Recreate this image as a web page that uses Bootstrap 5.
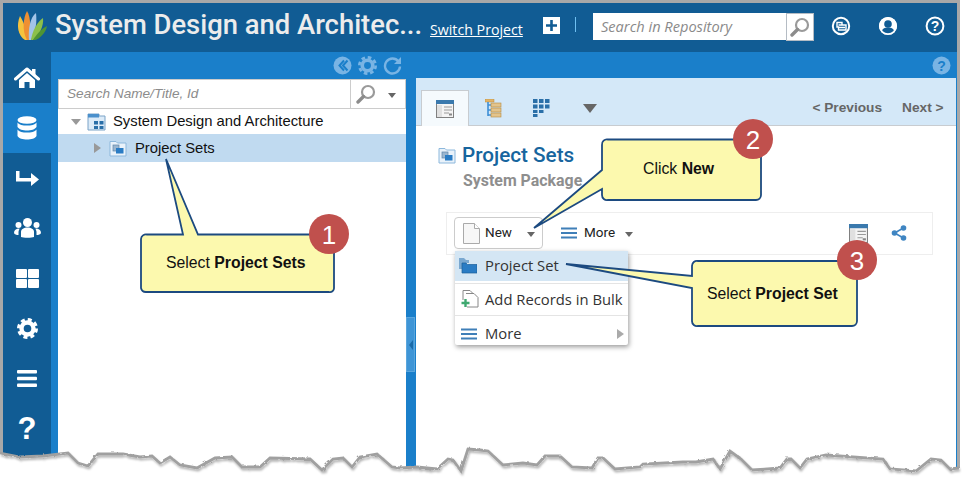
<!DOCTYPE html>
<html lang="en">
<head>
<meta charset="utf-8">
<title>Project Sets</title>
<link rel="stylesheet" href="https://cdn.jsdelivr.net/npm/bootstrap@5.3.0/dist/css/bootstrap.min.css">
<style>
html,body{margin:0;background:#fff;overflow:hidden}
body{width:966px;height:487px;position:relative;font-family:"Liberation Sans",Arial,sans-serif}
.shot-edge{width:960px;height:487px;background:#a8a8a8;padding:3px 3px 0 3px}
.app-shell{height:484px;background:#1a7fca}
.top-head{height:49px;background:#115c94;color:#fff;padding-left:13px}
.logo-mark{width:32px;height:32px;margin-right:7px;margin-top:-4px;flex:none}
.app-title{font:500 27.4px/1 Roboto,sans-serif;color:#ececec;width:375px;white-space:nowrap;margin-top:-3px;flex:none}
.switch-link{font:14.2px/1 "Open Sans",sans-serif;color:#fff;text-decoration:underline;width:113px;margin-top:5px;flex:none;white-space:nowrap}
.plus-box{width:17px;height:17px;background:#fff;margin-right:15px;margin-top:-4px;flex:none}
.head-sep{width:1px;height:15px;background:#6fc0f2;margin-right:17px;margin-top:-7px;flex:none}
.repo-search{width:221px;height:27px;margin-top:-3px;margin-right:17px;flex:none;background:#fff}
.repo-search span{flex:1;font:italic 14.6px/26px "Open Sans",sans-serif;color:#8a8a8a;padding-left:8px;white-space:nowrap}
.repo-btn{width:28px;height:28px;border:1px solid #b5bcc4;background:#fff}
.ring-icon{width:20px;height:20px;margin-right:27px;margin-top:-3px;flex:none}
.side-rail{width:48px;background:#115c94;flex:none}
.rail-item{height:50px;color:#fff}
.rail-item.first-item{height:51px}
.rail-item.is-on{background:#1a7fca}
.rail-q{font:700 31px/1 "Liberation Sans",sans-serif}
.work-area{padding-left:7px;min-width:0}
.band-row{height:26px;padding-right:5px}
.band-left{width:348px;height:26px;padding-right:4px;gap:6px;flex:none}
.band-right{padding-right:1px}
.tree-panel{width:348px;background:#fff;margin-top:1px;flex:none}
.tree-search{height:30px;border:1px solid #ccc;background:#fff}
.tree-search span{flex:1;font:italic 13.6px/28px "Liberation Sans",sans-serif;color:#8c8c8c;padding-left:8px}
.tree-tools{width:55px;border-left:1px solid #ccc;height:100%;padding-left:5px}
.tree-row{font:14.8px/1 "Liberation Sans",sans-serif;color:#111;white-space:nowrap}
.tree-root{height:25px;padding-left:13px;gap:6px}
.tree-root span{margin-left:1px}
.tree-sel{height:28px;background:#c0daf0;padding-left:36px}
.tri-gray{width:0;height:0;border-style:solid;flex:none}
.split-gap{width:10px;flex:none}
.split-handle{width:9px;height:55px;margin-top:239px;background:#3f95d6;border:1px solid #5aa6dd}
.detail-panel{width:539.5px;background:#fff;flex:none;margin-right:1px;position:relative}
.tab-strip{height:48px;background:#d4e8f8;border-bottom:1px solid #c8ccd0;padding:12px 12px 0 5px}
.tab-on{width:48px;height:36px;background:#f5fafd;border:1px solid #c8ccd0;border-bottom:0;padding-top:9px;flex:none}
.tab-off{flex:none;margin-top:9px}
.pager{margin-left:auto;font:700 13.7px/1 "Liberation Sans",sans-serif;color:#666;gap:20px;padding-top:11px}
.head-block{padding:19px 0 0 22px}
.page-title{font:500 20.7px/1 Roboto,sans-serif;color:#17659e;margin-left:6px}
.page-sub{font:700 15.9px/1 Roboto,sans-serif;color:#8e8e8e;padding:7px 0 0 25px}
.action-bar{width:487px;height:43px;margin:23px 0 0 30px;border:1px solid #eee;padding:4px 7px;position:relative}
.new-btn{width:89px;height:32px;border:1px solid #ccc;border-radius:4px;font:13.5px/1 Roboto,sans-serif;color:#222;padding:0 0 0 8px;background:#fff;gap:5px}
.new-btn .tri-down{margin-left:10px}
.more-btn{font:13.5px/1 Roboto,sans-serif;color:#222;gap:7px;margin-left:18px}
.more-btn .tri-down{margin-left:3px}
.tri-down{width:0;height:0;border-left:4.5px solid transparent;border-right:4.5px solid transparent;border-top:5px solid #666;flex:none;margin-top:2px}
.bar-right{margin-left:auto;gap:23px;padding-right:18px}
.drop-box{position:absolute;display:block;left:8px;top:38px;width:173px;height:94px;min-width:0;padding:0;border:0;border-radius:2px;background:#fff;box-shadow:1px 2px 5px rgba(0,0,0,.4);font:14.8px/1 "Open Sans",sans-serif;color:#333}
.drop-row{height:31px;padding:0 0 0 6px;gap:6px;color:#333;white-space:nowrap;font:inherit}
.drop-row.is-hot{background:#d4e6f4;height:30px;padding-left:4px;gap:8px}
.drop-row.is-last{height:29px;padding-top:7px}
.drop-line{height:1px;background:#e4e4e4;margin:2px 0 0}
.drop-line.tight{margin:0}
.over-svg{position:absolute;left:0;top:0;width:966px;height:487px;pointer-events:none;z-index:1100}
.tip-text{font:15.8px "Liberation Sans",Arial,sans-serif;fill:#111}
.tip-num{font:26px "Liberation Sans",Arial,sans-serif;fill:#fff}
</style>
</head>
<body>
<svg width="0" height="0" class="position-absolute">
<defs>
<symbol id="ic-folder" viewBox="0 0 18 18">
<path d="M1 2.500h6l1.500 1.500H17v13H1z" fill="#e9f2fa" stroke="#8db8dc"/>
<rect x="4" y="6" width="6" height="6" fill="#9bb6cf" stroke="#5f87a8" stroke-width=".7"/>
<rect x="7" y="9" width="7.500" height="5.500" fill="#2a7cc4"/>
</symbol>
<symbol id="ic-window" viewBox="0 0 18 18">
<rect x=".5" y=".5" width="17" height="17" fill="#f4f4f4" stroke="#808080"/>
<rect x="0" y="0" width="18" height="4" fill="#3a79ad"/>
<rect x="1" y="5" width="5" height="12" fill="#e0e0e0"/>
<path d="M8 7h8M8 10h8M8 13h5" stroke="#9a9a9a"/>
<rect x="13" y="13.500" width="3" height="2" fill="#888"/>
</symbol>
<symbol id="ic-lines" viewBox="0 0 16 12">
<path d="M0 1.500h16M0 6h16M0 10.500h16" stroke="#3f7fb8" stroke-width="2.200"/>
</symbol>
<symbol id="ic-lens" viewBox="0 0 20 20">
<circle cx="12" cy="8" r="6" fill="none" stroke="#9a9a9a" stroke-width="2.200"/>
<path d="M7.500 12.500L2 18" stroke="#8c8c8c" stroke-width="3.400" stroke-linecap="round"/>
</symbol>
</defs>
</svg>

<div class="shot-edge">
<div class="app-shell d-flex flex-column">
  <header class="top-head d-flex align-items-center">
    <svg class="logo-mark" viewBox="0 0 32 32">
      <path d="M9 30C2 26 0 15 4 6c4 6 7 16 7 24z" fill="#f5c23e"/>
      <path d="M11 30C6 21 7 8 11 1c4 6 4 20 2 29z" fill="#ef8f32"/>
      <path d="M13 30C12 20 14 7 20 3c1 8 0 19-5 27z" fill="#a3c4e8"/>
      <path d="M15 30c1-8 6-18 12-22 1 8-4 18-10 22z" fill="#8cc04a"/>
      <path d="M17 30c3-5 8-11 14-14-1 7-8 13-12 14z" fill="#4f9433"/>
    </svg>
    <div class="app-title">System Design and Architec...</div>
    <a class="switch-link" href="#">Switch Project</a>
    <svg class="plus-box" viewBox="0 0 17 17"><path d="M8.500 3v11M3 8.500h11" stroke="#115c94" stroke-width="2.600"/></svg>
    <div class="head-sep"></div>
    <div class="repo-search d-flex align-items-start">
      <span>Search in Repository</span>
      <div class="repo-btn d-flex align-items-center justify-content-center"><svg width="20" height="20"><use href="#ic-lens"/></svg></div>
    </div>
    <svg class="ring-icon" viewBox="0 0 20 20"><circle cx="10" cy="10" r="8.200" fill="none" stroke="#fff" stroke-width="2"/><path d="M6 6.500h5v2.500h4v5H7.500v-3H6zM7.500 9h3.500M8 11.500h6" fill="none" stroke="#fff" stroke-width="1.400"/></svg>
    <svg class="ring-icon" viewBox="0 0 20 20"><circle cx="10" cy="10" r="9" fill="#fff"/><circle cx="10" cy="8" r="3.800" fill="#115c94"/><path d="M3.500 16c1-4 4-4.500 6.500-4.500s5.500.5 6.500 4.500A9 9 0 0 1 3.500 16z" fill="#115c94"/><circle cx="10" cy="10" r="8.200" fill="none" stroke="#fff" stroke-width="1.800"/></svg>
    <svg class="ring-icon" viewBox="0 0 20 20"><circle cx="10" cy="10" r="8.400" fill="none" stroke="#fff" stroke-width="2"/><text x="10" y="14.800" text-anchor="middle" font-family="Liberation Sans" font-weight="700" font-size="14" fill="#fff">?</text></svg>
  </header>

  <div class="d-flex flex-grow-1 overflow-hidden">
    <nav class="side-rail d-flex flex-column">
      <div class="rail-item first-item d-flex align-items-center justify-content-center">
        <svg width="26" height="22" viewBox="0 0 26 22"><path d="M1.500 12L13 2l11.500 10" fill="none" stroke="#fff" stroke-width="3" stroke-linecap="round" stroke-linejoin="round"/><path d="M5 13l8-7 8 7v8h-5.500v-6h-5v6H5z" fill="#fff"/><rect x="18" y="2" width="3.500" height="6" fill="#fff"/></svg>
      </div>
      <div class="rail-item is-on d-flex align-items-center justify-content-center">
        <svg width="20" height="24" viewBox="0 0 20 24"><ellipse cx="10" cy="4" rx="9.500" ry="3.800" fill="#fff"/><path d="M.5 6.500C2 9 6 9.500 10 9.500s8-.5 9.500-3v4.500C18 13.500 14 14.500 10 14.500S2 13.500.5 11z" fill="#fff"/><path d="M.5 13.500C2 16 6 16.500 10 16.500s8-.5 9.500-3V20c-1 2.500-5.500 3.500-9.500 3.500S1.500 22.500.5 20z" fill="#fff"/></svg>
      </div>
      <div class="rail-item d-flex align-items-center justify-content-center">
        <svg width="23" height="16" viewBox="0 0 23 16"><path d="M0 1h3.500v7H15V3l8 6.500-8 6.500v-4.500H0z" fill="#fff"/></svg>
      </div>
      <div class="rail-item d-flex align-items-center justify-content-center">
        <svg width="27" height="20" viewBox="0 0 27 20"><circle cx="13.500" cy="4.500" r="4.500" fill="#fff"/><circle cx="4.500" cy="7" r="3" fill="#fff"/><circle cx="22.500" cy="7" r="3" fill="#fff"/><path d="M7 19v-5c0-3 3-4.500 6.500-4.500S20 11 20 14v5c-2 1-11 1-13 0z" fill="#fff"/><path d="M0 15c0-3 2-4.500 5.500-4.500 0 1-1 2-1 3.500v3c-2 0-4-.5-4.500-2zM27 15c0-3-2-4.500-5.500-4.500 0 1 1 2 1 3.500v3c2 0 4-.5 4.500-2z" fill="#fff"/></svg>
      </div>
      <div class="rail-item d-flex align-items-center justify-content-center">
        <svg width="23" height="19" viewBox="0 0 23 19"><rect width="11" height="9" rx="1" fill="#fff"/><rect x="12" width="11" height="9" rx="1" fill="#fff"/><rect y="10" width="11" height="9" rx="1" fill="#fff"/><rect x="12" y="10" width="11" height="9" rx="1" fill="#fff"/></svg>
      </div>
      <div class="rail-item d-flex align-items-center justify-content-center">
        <svg width="21" height="21" viewBox="0 0 21 21"><circle cx="10.500" cy="10.500" r="6" fill="none" stroke="#fff" stroke-width="4.400"/><circle cx="10.500" cy="10.500" r="9" fill="none" stroke="#fff" stroke-width="3" stroke-dasharray="4 3.070"/></svg>
      </div>
      <div class="rail-item d-flex align-items-center justify-content-center">
        <svg width="20" height="17" viewBox="0 0 20 17"><rect width="20" height="3.500" rx="1" fill="#fff"/><rect y="6.700" width="20" height="3.500" rx="1" fill="#fff"/><rect y="13.400" width="20" height="3.500" rx="1" fill="#fff"/></svg>
      </div>
      <div class="rail-item rail-q d-flex align-items-center justify-content-center">?</div>
    </nav>

    <div class="work-area flex-grow-1 d-flex flex-column">
      <div class="band-row d-flex">
        <div class="band-left d-flex align-items-center justify-content-end">
          <svg width="19" height="19" viewBox="0 0 19 19"><circle cx="9.500" cy="9.500" r="9" fill="#79b4e4"/><path d="M11 4.500L6.500 9.500l4.500 5M14.500 4.500L10 9.500l4.500 5" fill="none" stroke="#1a7fca" stroke-width="2"/></svg>
          <svg width="19" height="19" viewBox="0 0 21 21"><circle cx="10.500" cy="10.500" r="5.800" fill="none" stroke="#79b4e4" stroke-width="4"/><circle cx="10.500" cy="10.500" r="9" fill="none" stroke="#79b4e4" stroke-width="3" stroke-dasharray="4 3.070"/></svg>
          <svg width="19" height="19" viewBox="0 0 19 19"><path d="M15.500 5.500A7.500 7.500 0 1 0 17 10.500" fill="none" stroke="#79b4e4" stroke-width="2.400"/><path d="M18 1v7h-7z" fill="#79b4e4"/></svg>
        </div>
        <div class="flex-grow-1 band-right d-flex align-items-center justify-content-end">
          <svg width="19" height="19" viewBox="0 0 19 19"><circle cx="9.500" cy="9.500" r="9" fill="#79b4e4"/><text x="9.500" y="14.500" text-anchor="middle" font-family="Liberation Sans" font-weight="700" font-size="14" fill="#1a7fca">?</text></svg>
        </div>
      </div>
      <div class="d-flex flex-grow-1">
        <section class="tree-panel">
          <div class="tree-search d-flex align-items-center">
            <span>Search Name/Title, Id</span>
            <div class="tree-tools d-flex align-items-center gap-2">
              <svg width="20" height="20"><use href="#ic-lens"/></svg>
              <div class="tri-down ms-1"></div>
            </div>
          </div>
          <div class="tree-row tree-root d-flex align-items-center">
            <div class="tri-gray" style="border-width:6px 5px 0;border-color:#999 transparent transparent"></div>
            <svg width="19" height="18" viewBox="0 0 19 18"><path d="M1 1h11v2h6v14H1z" fill="#dcebf8" stroke="#7aa3c7"/><rect x="1" y="1" width="11" height="3.500" fill="#4a90cc"/><rect x="7" y="8" width="4" height="3.500" fill="#2a6fa8"/><rect x="12.500" y="8" width="4" height="3.500" fill="#2a6fa8"/><rect x="7" y="13" width="4" height="3" fill="#2a6fa8"/><rect x="12.500" y="13" width="4" height="3" fill="#2a6fa8"/></svg>
            <span>System Design and Architecture</span>
          </div>
          <div class="tree-row tree-sel d-flex align-items-center">
            <div class="tri-gray me-2" style="border-width:5px 0 5px 7px;border-color:transparent transparent transparent #999"></div>
            <svg width="18" height="18" class="me-2"><use href="#ic-folder"/></svg>
            <span>Project Sets</span>
          </div>
        </section>
        <div class="split-gap"><div class="split-handle d-flex align-items-center justify-content-center"><div class="tri-gray" style="border-width:5px 4px 5px 0;border-color:transparent #1a6aa8 transparent transparent"></div></div></div>
        <section class="detail-panel">
          <div class="tab-strip d-flex">
            <div class="tab-on d-flex justify-content-center"><svg width="18" height="18"><use href="#ic-window"/></svg></div>
            <svg class="tab-off" width="17" height="19" viewBox="0 0 17 19" style="margin-left:16px"><rect x="0" y="0" width="9" height="3" fill="#e3b468" stroke="#b58a40" stroke-width=".5"/><path d="M3 3v14M3 6h4M3 11h4M3 16h4" stroke="#3f8fd6" stroke-width="1.600" fill="none"/><rect x="6" y="4" width="10" height="4" fill="#e3c48c" stroke="#b58a40" stroke-width=".6"/><rect x="6" y="9" width="10" height="4" fill="#e3c48c" stroke="#b58a40" stroke-width=".6"/><rect x="6" y="14" width="10" height="4" fill="#e3c48c" stroke="#b58a40" stroke-width=".6"/></svg>
            <svg class="tab-off" width="17" height="18" viewBox="0 0 17 18" style="margin-left:31px"><g fill="#2a6fa8"><rect width="4.500" height="4"/><rect x="6" width="4.500" height="4"/><rect x="12" width="4.500" height="4"/><rect y="5.500" width="4.500" height="4"/><rect x="6" y="5.500" width="4.500" height="4"/><rect x="12" y="5.500" width="4.500" height="4"/><rect y="11" width="4.500" height="3"/><rect x="6" y="11" width="4.500" height="3"/><rect y="15" width="4.500" height="3"/></g></svg>
            <div class="tri-gray tab-off" style="margin-left:33px;margin-top:14px;border-width:9px 7px 0;border-color:#666 transparent transparent"></div>
            <div class="pager d-flex"><span>&lt; Previous</span><span>Next &gt;</span></div>
          </div>
          <div class="head-block">
            <div class="d-flex align-items-center"><svg width="18" height="18"><use href="#ic-folder"/></svg><div class="page-title">Project Sets</div></div>
            <div class="page-sub">System Package</div>
          </div>
          <div class="action-bar d-flex align-items-center">
            <button type="button" class="new-btn d-flex align-items-center">
              <svg width="17" height="21" viewBox="0 0 17 21"><path d="M.5.5h11l5 5v15H.5z" fill="#f7f7f7" stroke="#aaa"/><path d="M11.500.5v5h5" fill="#fff" stroke="#aaa"/></svg>
              <span>New</span>
              <span class="tri-down"></span>
            </button>
            <div class="more-btn d-flex align-items-center">
              <svg width="16" height="12"><use href="#ic-lines"/></svg>
              <span>More</span>
              <span class="tri-down"></span>
            </div>
            <div class="bar-right d-flex align-items-center">
              <svg width="19" height="19"><use href="#ic-window"/></svg>
              <svg width="16" height="16" viewBox="0 0 16 16"><path d="M12.500 3L3.500 8l9 5" fill="none" stroke="#3f85c2" stroke-width="1.600"/><circle cx="12.500" cy="3" r="2.800" fill="#3f85c2"/><circle cx="3.500" cy="8" r="2.800" fill="#3f85c2"/><circle cx="12.500" cy="13" r="2.800" fill="#3f85c2"/></svg>
            </div>
            <div class="dropdown-menu drop-box">
              <div class="drop-row is-hot d-flex align-items-center"><svg width="18" height="18" viewBox="0 0 18 18"><path d="M0 1h5l2 2h3v3H3v6H0z" fill="#7aa8d0"/><path d="M3 6h4l1.500 1.500H18V16H3z" fill="#2a7cc4" stroke="#1a5f99" stroke-width=".7"/></svg><span>Project Set</span></div>
              <div class="drop-line"></div>
              <div class="drop-row d-flex align-items-center"><svg width="18" height="18" viewBox="0 0 18 18"><path d="M2 10V.5h7l3 3" fill="none" stroke="#888"/><path d="M5 3.500h8l4 4V17H6" fill="#fff" stroke="#888"/><path d="M4.500 9v8M.5 13h8" stroke="#3fa870" stroke-width="2.400"/></svg><span>Add Records in Bulk</span></div>
              <div class="drop-line tight"></div>
              <div class="drop-row is-last d-flex align-items-center"><svg width="18" height="12" viewBox="0 0 18 12"><use href="#ic-lines" width="16" height="12"/></svg><span>More</span><div class="tri-gray ms-auto me-1" style="border-width:5px 0 5px 7px;border-color:transparent transparent transparent #aaa"></div></div>
            </div>
          </div>
        </section>
      </div>
    </div>
  </div>
</div>
</div>

<svg class="over-svg" viewBox="0 0 966 487">
  <defs><filter id="tear-shadow" x="-2%" y="-30%" width="104%" height="180%"><feTurbulence type="fractalNoise" baseFrequency=".22" numOctaves="2" seed="4" result="noise"/><feDisplacementMap in="SourceGraphic" in2="noise" scale="3" result="rough"/><feDropShadow in="rough" dx="1" dy="2" stdDeviation="1" flood-color="#000" flood-opacity=".3"/></filter></defs>
  <!-- callout 1 -->
  <path d="M147 234.500H183L166 159L198 234.500H327a5 5 0 0 1 7 5V288a4 4 0 0 1-5 4H146a5 5 0 0 1-5-4V239a5 5 0 0 1 6-4.500z" fill="#fcf9ae" stroke="#1c4a80" stroke-width="1.800"/>
  <text class="tip-text" x="166" y="267.500">Select <tspan font-weight="700">Project Sets</tspan></text>
  <circle cx="329" cy="234" r="20" fill="#c0504d"/>
  <text class="tip-num" x="329" y="244" text-anchor="middle">1</text>
  <!-- callout 2 -->
  <path d="M608 139.500H755a5 5 0 0 1 6 5V195a5 5 0 0 1-5 5H608a5 5 0 0 1-6-5V189L534 228L602 170V145a5 5 0 0 1 6-5.500z" fill="#fcf9ae" stroke="#1c4a80" stroke-width="1.800"/>
  <text class="tip-text" x="643" y="173.500">Click <tspan font-weight="700">New</tspan></text>
  <circle cx="753" cy="139" r="20" fill="#c0504d"/>
  <text class="tip-num" x="753" y="149" text-anchor="middle">2</text>
  <!-- callout 3 -->
  <path d="M698 261H851a5 5 0 0 1 6 5V321a5 5 0 0 1-5 5H698a5 5 0 0 1-6-5V288L566 264L692 276V266a5 5 0 0 1 6-5z" fill="#fcf9ae" stroke="#1c4a80" stroke-width="1.800"/>
  <text class="tip-text" x="707" y="298.500">Select <tspan font-weight="700">Project Set</tspan></text>
  <circle cx="857" cy="260" r="20" fill="#c0504d"/>
  <text class="tip-num" x="857" y="270" text-anchor="middle">3</text>
  <!-- torn edge -->
  <path fill="#fff" d="M0 453L20 457L43 456L68 453L78 463L88 466L98 454L123 454L140 457L152 456L160 463L170 457L180 465L197 468L215 458L232 457L242 467L260 467L270 458L310 459L322 470L333 459L343 458L352 467L360 457L377 454L392 467L400 468L417 467L437 469L448 459L453 460L461 471L468 449L480 450L488 451L503 465L523 463L537 465L545 456L560 456L572 467L592 468L598 458L603 458L615 469L640 467L643 464L683 462L696 462L713 459L720 469L730 451L741 459L752 470L780 468L787 459L791 459L800 468L807 459L816 457L826 455L883 459L890 469L916 471L931 459L941 460L950 469L957 468L966 468V487H0z"/>
  <path fill="none" stroke="#a0a0a0" stroke-width="2.800" filter="url(#tear-shadow)" d="M0 453L20 457L43 456L68 453L78 463L88 466L98 454L123 454L140 457L152 456L160 463L170 457L180 465L197 468L215 458L232 457L242 467L260 467L270 458L310 459L322 470L333 459L343 458L352 467L360 457L377 454L392 467L400 468L417 467L437 469L448 459L453 460L461 471L468 449L480 450L488 451L503 465L523 463L537 465L545 456L560 456L572 467L592 468L598 458L603 458L615 469L640 467L643 464L683 462L696 462L713 459L720 469L730 451L741 459L752 470L780 468L787 459L791 459L800 468L807 459L816 457L826 455L883 459L890 469L916 471L931 459L941 460L950 469L959 468"/>
</svg>
</body>
</html>
